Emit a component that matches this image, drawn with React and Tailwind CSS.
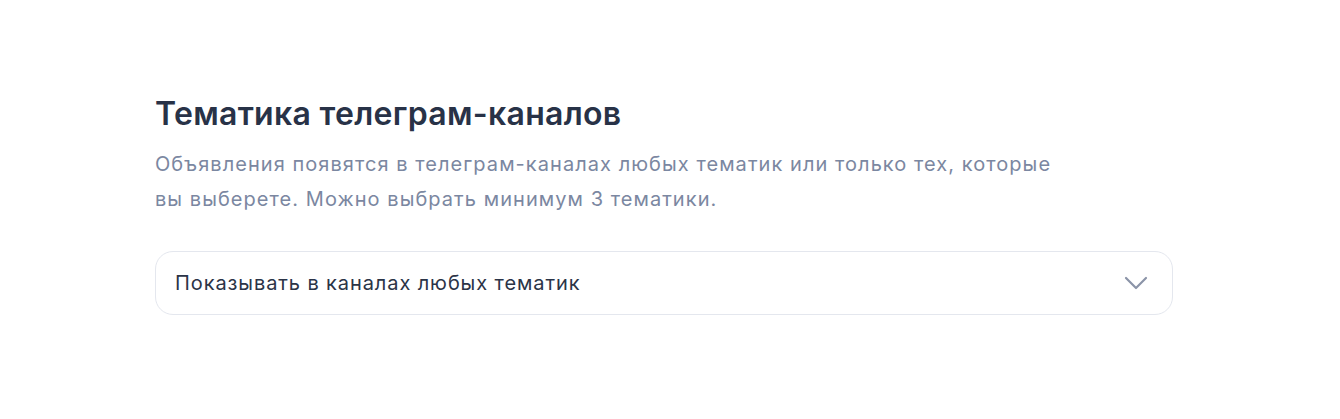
export default function App() {
  return (
    <div className="w-[1340px] h-[419px] bg-white" style={{ fontFamily: 'Inter, "Noto Sans", sans-serif' }}>
      <div className="pl-[155px] pr-[167px] pt-[92px]">
        <h1 className="text-[32px] leading-[44px] font-semibold text-[#283247] tracking-[0.3px]">Тематика телеграм-каналов</h1>
        <p className="mt-[11px] text-[20px] leading-[35px] text-[#7b87a1] tracking-[1.05px]">
          Объявления появятся в телеграм-каналах любых тематик или только тех, которые
          <br />
          вы выберете. Можно выбрать минимум 3 тематики.
        </p>
        <div className="mt-[34px] h-[64px] rounded-[18px] border border-[#e4e7ee] flex items-center justify-between pl-[19px] pr-[24px]">
          <span className="text-[20px] text-[#2b3447] tracking-[0.9px]">Показывать в каналах любых тематик</span>
          <svg width="24" height="14" viewBox="0 0 24 14" fill="none">
            <path d="M2 2l10 10 10-10" stroke="#8b94a8" strokeWidth="2.2" strokeLinecap="round" strokeLinejoin="round" />
          </svg>
        </div>
      </div>
    </div>
  );
}
